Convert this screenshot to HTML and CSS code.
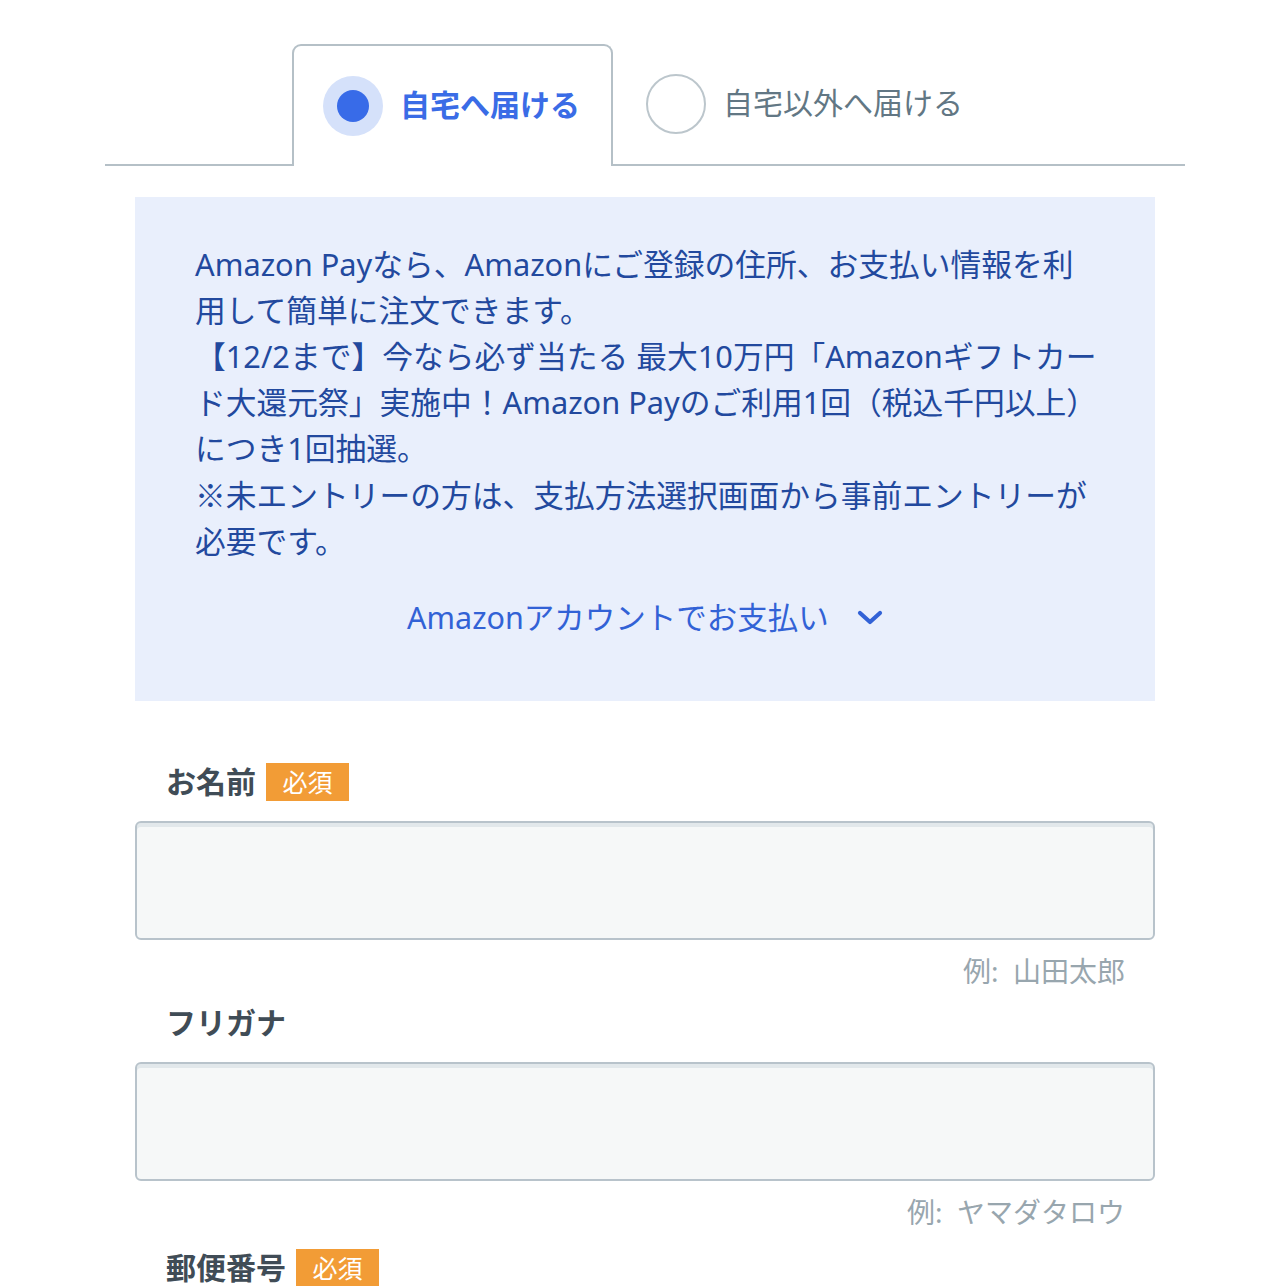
FILE: index.html
```html
<!DOCTYPE html>
<html lang="ja">
<head>
<meta charset="utf-8">
<title>お届け先</title>
<link rel="stylesheet" href="styles.css">
</head>
<body>
<div class="page">
  <div class="tabs">
    <div class="tab-spacer"></div>
    <div class="tab tab-active">
      <span class="radio radio-on"><span class="radio-dot"></span></span>
      <span class="tab-label">自宅へ届ける</span>
    </div>
    <div class="tab tab-rest">
      <span class="radio radio-off"></span>
      <span class="tab-label">自宅以外へ届ける</span>
    </div>
  </div>

  <section class="info">
    <p class="info-text">Amazon Payなら、Amazonにご登録の住所、お支払い情報を利<br>用して簡単に注文できます。<br>【12/2まで】今なら必ず当たる 最大10万円「Amazonギフトカー<br>ド大還元祭」実施中！Amazon Payのご利用1回（税込千円以上）<br>につき1回抽選。<br><span class="cjk">※</span>未エントリーの方は、支払方法選択画面から事前エントリーが<br>必要です。</p>
    <div class="info-link">
      <span>Amazonアカウントでお支払い</span>
      <svg class="chev" width="26" height="16" viewBox="0 0 26 16"><path d="M3 3 L13 12 L23 3" fill="none" stroke="currentColor" stroke-width="4.2" stroke-linecap="round" stroke-linejoin="round"/></svg>
    </div>
  </section>

  <form class="form">
    <div class="field">
      <div class="label-row"><span class="label">お名前</span><span class="badge">必須</span></div>
      <div class="input"></div>
      <div class="hint">例:&nbsp; 山田太郎</div>
    </div>
    <div class="field">
      <div class="label-row"><span class="label">フリガナ</span></div>
      <div class="input"></div>
      <div class="hint">例:&nbsp; ヤマダタロウ</div>
    </div>
    <div class="field">
      <div class="label-row"><span class="label">郵便番号</span><span class="badge">必須</span></div>
    </div>
  </form>
</div>
</body>
</html>
```

FILE: styles.css
```css
html, body {
  margin: 0;
  padding: 0;
  background: #ffffff;
}

body {
  font-family: "Noto Sans CJK JP", "Noto Sans", sans-serif;
  overflow: hidden;
}

.page {
  width: 1080px;
  margin-left: 105px;
  padding-top: 44px;
}

/* Tabs */
.tabs {
  display: flex;
  align-items: flex-end;
  height: 122px;
}

.tab-spacer {
  width: 187px;
  height: 0;
  border-bottom: 2px solid #b5c0c7;
}

.tab {
  display: flex;
  align-items: center;
  box-sizing: border-box;
}

.tab-active {
  width: 321px;
  height: 122px;
  border: 2px solid #b5c0c7;
  border-bottom: none;
  border-radius: 9px 9px 0 0;
  padding-left: 29px;
  gap: 17px;
}

.tab-rest {
  flex: 1;
  height: 122px;
  border-bottom: 2px solid #b5c0c7;
  padding-left: 33px;
  gap: 17px;
}

.radio {
  width: 60px;
  height: 60px;
  border-radius: 50%;
  box-sizing: border-box;
  display: flex;
  align-items: center;
  justify-content: center;
  flex-shrink: 0;
}

.radio-on {
  background: #d5e1fa;
}

.radio-dot {
  width: 32px;
  height: 32px;
  border-radius: 50%;
  background: #386be8;
}

.radio-off {
  border: 2px solid #bcc6cc;
  background: #ffffff;
}

.tab-label {
  font-size: 30px;
  line-height: 40px;
  padding-bottom: 6px;
  color: #627784;
  white-space: nowrap;
}

.tab-active .tab-label {
  color: #3a6ce6;
  font-weight: 700;
}

/* Info box */
.info {
  margin: 31px 30px 0;
  background: #e9effc;
  padding: 44px 20px 61px 60px;
}

.info-text {
  margin: 0;
  font-family: "Noto Sans", "Noto Sans CJK JP", sans-serif;
  font-size: 30.75px;
  line-height: 46px;
  color: #22499e;
  white-space: nowrap;
}

.cjk {
  font-family: "Noto Sans CJK JP", sans-serif;
}

.info-link {
  margin-top: 30px;
  margin-left: -40px;
  display: flex;
  justify-content: center;
  align-items: center;
  gap: 28px;
  font-family: "Noto Sans", "Noto Sans CJK JP", sans-serif;
  font-size: 30.5px;
  line-height: 46px;
  color: #3262d6;
}

.chev {
  display: block;
  margin-top: 2px;
}

/* Form */
.form {
  margin: 61px 30px 0;
}

.label-row {
  display: flex;
  align-items: center;
  gap: 10px;
  height: 40px;
  padding-left: 31px;
}

.label {
  font-size: 30px;
  font-weight: 700;
  color: #404c56;
  line-height: 40px;
  padding-bottom: 4px;
}

.badge {
  display: inline-flex;
  align-items: center;
  justify-content: center;
  width: 83px;
  height: 38px;
  background: #f29c36;
  color: #ffffff;
  font-size: 25px;
  line-height: 38px;
  padding-bottom: 2px;
  box-sizing: border-box;
}

.input {
  margin-top: 19px;
  height: 119px;
  box-sizing: border-box;
  border: 2px solid #b8c3cb;
  border-radius: 6px;
  background: #f6f8f8;
  box-shadow: inset 0 4px 0 #e2e8eb;
}

.hint {
  margin-top: 11px;
  margin-bottom: 12px;
  padding-right: 30px;
  text-align: right;
  font-family: "Noto Sans", "Noto Sans CJK JP", sans-serif;
  font-size: 28px;
  line-height: 40px;
  color: #98a6ae;
}

.field:nth-child(2) .hint {
  margin-bottom: 16px;
}
```
